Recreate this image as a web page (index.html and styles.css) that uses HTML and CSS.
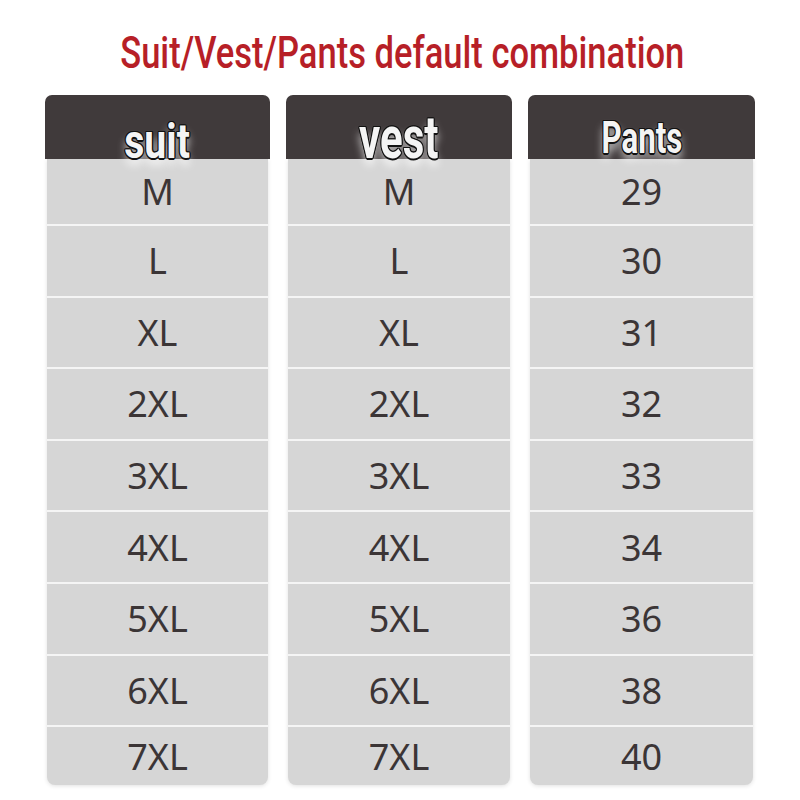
FILE: index.html
```html
<!DOCTYPE html>
<html lang="en">
<head>
<meta charset="utf-8">
<title>Suit/Vest/Pants default combination</title>
<link rel="stylesheet" href="styles.css">
</head>
<body>
<div class="page">
  <h1 class="title"><span class="title-text">Suit/Vest/Pants default combination</span></h1>
  <div class="table">
    <div class="col">
      <div class="head"><span class="label label-suit">suit</span></div>
      <div class="body">
        <div class="cell">M</div>
        <div class="cell">L</div>
        <div class="cell">XL</div>
        <div class="cell">2XL</div>
        <div class="cell">3XL</div>
        <div class="cell">4XL</div>
        <div class="cell">5XL</div>
        <div class="cell">6XL</div>
        <div class="cell">7XL</div>
      </div>
    </div>
    <div class="col">
      <div class="head"><span class="label label-vest">vest</span></div>
      <div class="body">
        <div class="cell">M</div>
        <div class="cell">L</div>
        <div class="cell">XL</div>
        <div class="cell">2XL</div>
        <div class="cell">3XL</div>
        <div class="cell">4XL</div>
        <div class="cell">5XL</div>
        <div class="cell">6XL</div>
        <div class="cell">7XL</div>
      </div>
    </div>
    <div class="col">
      <div class="head"><span class="label label-pants">Pants</span></div>
      <div class="body">
        <div class="cell">29</div>
        <div class="cell">30</div>
        <div class="cell">31</div>
        <div class="cell">32</div>
        <div class="cell">33</div>
        <div class="cell">34</div>
        <div class="cell">36</div>
        <div class="cell">38</div>
        <div class="cell">40</div>
      </div>
    </div>
  </div>
</div>
</body>
</html>
```

FILE: styles.css
```css
html, body {
  margin: 0;
  padding: 0;
  background: #ffffff;
}

.page {
  width: 800px;
  height: 800px;
  overflow: hidden;
}

.title {
  margin: 0;
  height: 95px;
  box-sizing: border-box;
  padding-top: 31px;
  padding-left: 4px;
  text-align: center;
  font-family: Roboto, "Liberation Sans", sans-serif;
  font-weight: 500;
  font-size: 44px;
  line-height: 44px;
  color: #b71f27;
}

.title-text {
  display: inline-block;
  white-space: nowrap;
  transform: scaleX(0.785);
  transform-origin: center;
}

.table {
  display: grid;
  grid-template-columns: 225px 226px 227px;
  column-gap: 16px;
  padding-left: 45px;
}

.col {
  display: flex;
  flex-direction: column;
}

.head {
  height: 64px;
  background: #403a3b;
  border-radius: 7px 7px 0 0;
  display: flex;
  justify-content: center;
  align-items: flex-end;
  position: relative;
  z-index: 1;
}

.label {
  display: inline-block;
  font-family: Roboto, "Liberation Sans", sans-serif;
  font-weight: bold;
  color: #f4f4f4;
  line-height: 1;
  transform-origin: center bottom;
  text-shadow:
    -1.5px 0 0 #111, 1.5px 0 0 #111, 0 -1.5px 0 #111, 0 1.5px 0 #111,
    -1px -1px 0 #111, 1px -1px 0 #111, -1px 1px 0 #111, 1px 1px 0 #111,
    0 7px 10px rgba(255, 255, 255, 0.8);
}

.label-suit {
  font-size: 49px;
  margin-bottom: -7px;
  transform: scaleX(0.8);
}

.label-vest {
  font-size: 60px;
  line-height: 0.9;
  margin-bottom: -6px;
  transform: scaleX(0.7);
}

.label-pants {
  font-size: 44px;
  margin-bottom: -1px;
  transform: scaleX(0.71);
}

.body {
  margin: 0 2px;
  height: 626px;
  background: #d6d6d6;
  border-radius: 0 0 8px 8px;
  box-shadow: 0 1px 4px rgba(0, 0, 0, 0.12);
  display: grid;
  grid-template-rows: 65px repeat(7, 71.6px) 60px;
}

.cell {
  display: flex;
  align-items: center;
  justify-content: center;
  font-family: "Noto Sans", "Open Sans", sans-serif;
  font-size: 36px;
  color: #3b3536;
}

.cell + .cell {
  border-top: 2px solid #f5f5f5;
}
```
